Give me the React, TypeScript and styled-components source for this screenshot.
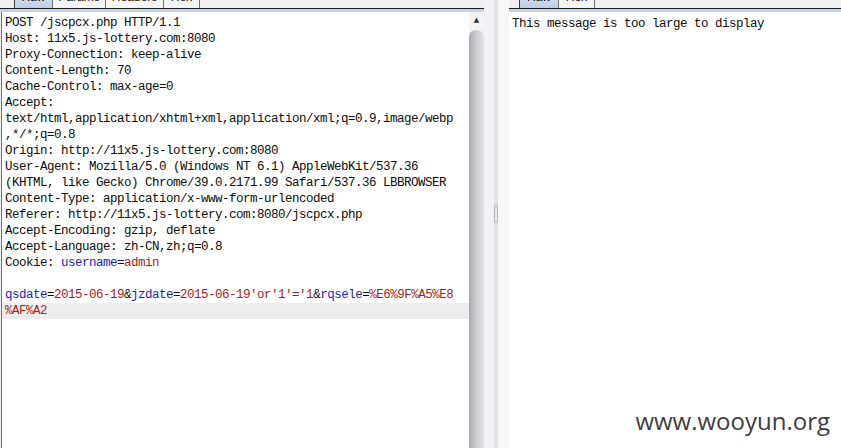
import React from 'react';
import styled, { createGlobalStyle } from 'styled-components';

type Seg = { t: string; k?: 'name' | 'value' };

const request: Seg[][] = [
  [{ t: 'POST /jscpcx.php HTTP/1.1' }],
  [{ t: 'Host: 11x5.js-lottery.com:8080' }],
  [{ t: 'Proxy-Connection: keep-alive' }],
  [{ t: 'Content-Length: 70' }],
  [{ t: 'Cache-Control: max-age=0' }],
  [{ t: 'Accept:' }],
  [{ t: 'text/html,application/xhtml+xml,application/xml;q=0.9,image/webp' }],
  [{ t: ',*/*;q=0.8' }],
  [{ t: 'Origin: http://11x5.js-lottery.com:8080' }],
  [{ t: 'User-Agent: Mozilla/5.0 (Windows NT 6.1) AppleWebKit/537.36' }],
  [{ t: '(KHTML, like Gecko) Chrome/39.0.2171.99 Safari/537.36 LBBROWSER' }],
  [{ t: 'Content-Type: application/x-www-form-urlencoded' }],
  [{ t: 'Referer: http://11x5.js-lottery.com:8080/jscpcx.php' }],
  [{ t: 'Accept-Encoding: gzip, deflate' }],
  [{ t: 'Accept-Language: zh-CN,zh;q=0.8' }],
  [{ t: 'Cookie: ' }, { t: 'username', k: 'name' }, { t: '=' }, { t: 'admin', k: 'value' }],
  [],
  [
    { t: 'qsdate', k: 'name' },
    { t: '=' },
    { t: '2015-06-19', k: 'value' },
    { t: '&' },
    { t: 'jzdate', k: 'name' },
    { t: '=' },
    { t: "2015-06-19'or'1'='1", k: 'value' },
    { t: '&' },
    { t: 'rqsele', k: 'name' },
    { t: '=' },
    { t: '%E6%9F%A5%E8', k: 'value' },
  ],
  [{ t: '%AF%A2', k: 'value' }],
];

const GlobalStyle = createGlobalStyle`
  html, body {
    margin: 0;
    padding: 0;
    background: #ffffff;
  }
`;

function Tabs({ inset, tabs }: { inset: number; tabs: { label: string; width: number }[] }) {
  return (
    <TabBar $inset={inset}>
      {tabs.map((tab, i) => (
        <Tab key={tab.label} $width={tab.width} $active={i === 0}>
          {tab.label}
        </Tab>
      ))}
    </TabBar>
  );
}

export default function App() {
  return (
    <>
      <GlobalStyle />
      <Frame>
        <Pane $width={484}>
          <Tabs
            inset={14}
            tabs={[
              { label: 'Raw', width: 39 },
              { label: 'Params', width: 54 },
              { label: 'Headers', width: 59 },
              { label: 'Hex', width: 37 },
            ]}
          />
          <Edge />
          <Body>
            <Editor $bordered>
              {request.map((line, i) => (
                <Line key={i} $current={i === request.length - 1}>
                  {line.map((seg, j) => (
                    <Token key={j} $kind={seg.k}>
                      {seg.t}
                    </Token>
                  ))}
                </Line>
              ))}
            </Editor>
            <Scrollbar>
              <ArrowButton>▲</ArrowButton>
              <Thumb />
            </Scrollbar>
          </Body>
        </Pane>

        <Divider>
          <Grip />
        </Divider>

        <Pane>
          <Tabs
            inset={10}
            tabs={[
              { label: 'Raw', width: 40 },
              { label: 'Hex', width: 37 },
            ]}
          />
          <Edge />
          <Body>
            <Editor $shift={1}>
              <Line>This message is too large to display</Line>
            </Editor>
          </Body>
        </Pane>

        <Watermark>www.wooyun.org</Watermark>
      </Frame>
    </>
  );
}

const Frame = styled.div`
  position: relative;
  display: flex;
  width: 841px;
  height: 448px;
  overflow: hidden;
  background: #f0f0f0;
`;

const Pane = styled.section<{ $width?: number }>`
  display: flex;
  flex-direction: column;
  min-width: 0;
  ${(p) => (p.$width ? `flex: none; width: ${p.$width}px;` : 'flex: 1;')}
`;

const TabBar = styled.div<{ $inset: number }>`
  display: flex;
  align-items: flex-end;
  height: 8px;
  padding-left: ${(p) => p.$inset}px;
  overflow: hidden;
  border-bottom: 1px solid #1c1c1c;
`;

const Tab = styled.div<{ $width: number; $active?: boolean }>`
  flex: none;
  box-sizing: border-box;
  width: ${(p) => p.$width}px;
  height: 20px;
  margin-right: -1px;
  padding-top: 0;
  border: 1px solid ${(p) => (p.$active ? '#3c3c3c' : '#707070')};
  border-bottom: none;
  border-radius: 2px 2px 0 0;
  background: ${(p) => (p.$active ? 'linear-gradient(#d9e6f4, #bcd0e8)' : '#f5f5f5')};
  font-family: 'Liberation Sans', Arial, sans-serif;
  font-size: 12px;
  line-height: 17px;
  text-align: center;
  color: #1a1a1a;
`;

const Edge = styled.div`
  height: 3px;
  background: #c2d4ea;
`;

const Body = styled.div`
  display: flex;
  flex: 1;
  min-height: 0;
`;

const Editor = styled.div<{ $bordered?: boolean; $shift?: number }>`
  flex: 1;
  min-width: 0;
  padding-top: ${(p) => 3 + (p.$shift ?? 0)}px;
  background: #ffffff;
  border-left: ${(p) => (p.$bordered ? '1px solid #7a6c63' : 'none')};
  margin-left: ${(p) => (p.$bordered ? '1px' : '0')};
  font-family: 'Liberation Mono', 'Courier New', monospace;
  font-size: 12.5px;
  letter-spacing: -0.5px;
  line-height: 16px;
  color: #0c0c0c;
  white-space: pre;
`;

const Line = styled.div<{ $current?: boolean }>`
  height: 16px;
  padding-left: 3px;
  background: ${(p) => (p.$current ? '#ededed' : 'transparent')};
`;

const Token = styled.span<{ $kind?: 'name' | 'value' }>`
  color: ${(p) => (p.$kind === 'name' ? '#1c1cc4' : p.$kind === 'value' ? '#a81c1c' : 'inherit')};
`;

const Scrollbar = styled.div`
  display: flex;
  flex-direction: column;
  flex: none;
  width: 15px;
  background: #f4f4f4;
`;

const ArrowButton = styled.div`
  height: 16px;
  font-family: 'DejaVu Sans', sans-serif;
  font-size: 7px;
  line-height: 16px;
  text-align: center;
  color: #2e2e2e;
`;

const Thumb = styled.div`
  flex: 1;
  margin-top: 2px;
  border-radius: 7px 7px 0 0;
  background: linear-gradient(to right, #a9abb1, #c8c9cd 45%, #e2e2e4);
`;

const Divider = styled.div`
  display: flex;
  justify-content: center;
  flex: none;
  width: 25px;
  padding-top: 205px;
  box-sizing: border-box;
  background: linear-gradient(to right, #f2f2f4 0 10px, #dfe2e8 10px 14px, #f8f8f8 14px);
`;

const Grip = styled.div`
  box-sizing: border-box;
  width: 4px;
  height: 18px;
  margin-left: -1px;
  border: 1px solid #aeb2ba;
  border-radius: 2px;
  background: #e8eaee;
`;

const Watermark = styled.div`
  position: absolute;
  right: 11px;
  bottom: 12px;
  font-family: 'Open Sans', 'Noto Sans', sans-serif;
  font-size: 24px;
  line-height: 30px;
  color: #3e3e3e;
`;
